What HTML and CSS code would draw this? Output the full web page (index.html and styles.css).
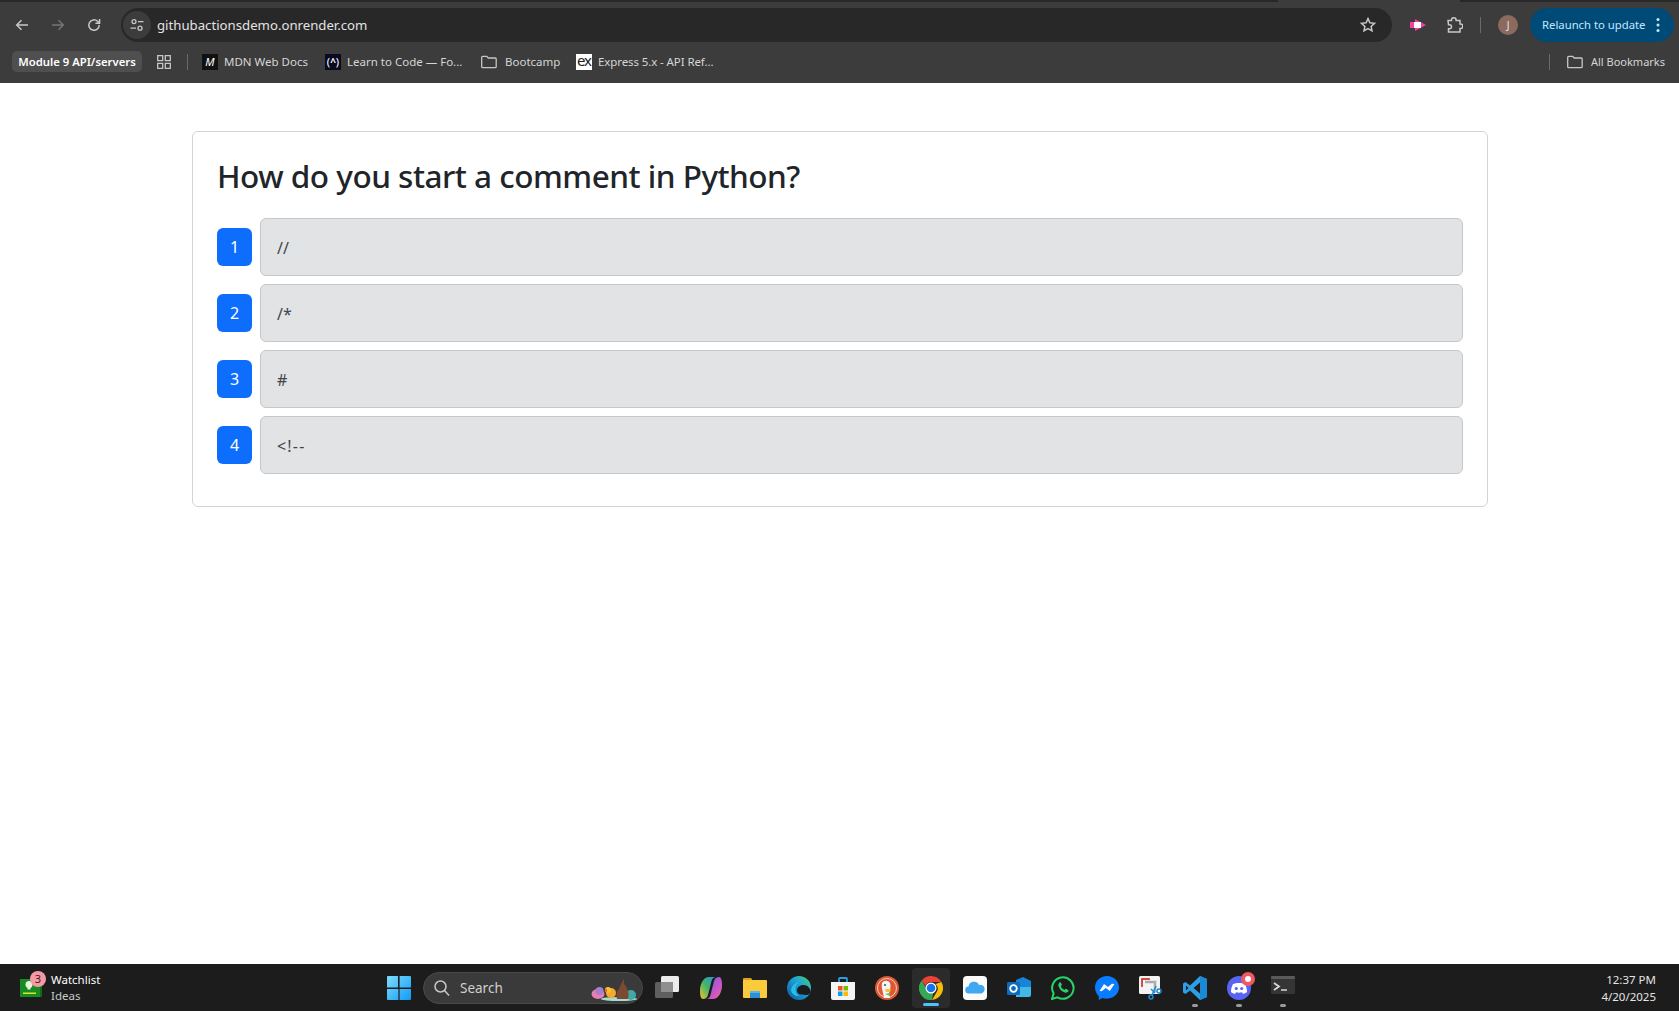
FILE: index.html
```html
<!DOCTYPE html>
<html lang="en">
<head>
<meta charset="utf-8">
<title>Quiz</title>
<link rel="stylesheet" href="styles.css">
</head>
<body>
<header class="browser">
  <div class="tabedge"><span class="tabedge-a"></span><span class="tabedge-b"></span></div>
  <div class="toolbar">
    <button class="nav nav-back"><svg viewBox="0 0 16 16" width="16" height="16"><path d="M14 8H3M7.5 3.2 2.7 8l4.8 4.8" class="st"/></svg></button>
    <button class="nav nav-fwd"><svg viewBox="0 0 16 16" width="16" height="16"><path d="M2 8h11M8.5 3.2 13.3 8l-4.8 4.8" class="st dim"/></svg></button>
    <button class="nav nav-reload"><svg viewBox="0 0 16 16" width="16" height="16"><path d="M13.2 8A5.2 5.2 0 1 1 11.6 4.3L13.4 6M13.6 2v4.2H9.4" class="st"/></svg></button>
    <div class="omnibox">
      <span class="siteinfo"><svg viewBox="0 0 16 16" width="16" height="16"><circle cx="5" cy="4.6" r="2" class="st thin"/><path d="M9 4.6h5.5M1.5 11.2H7" class="st thin"/><circle cx="11" cy="11.2" r="2" class="st thin"/></svg></span>
      <span class="url">githubactionsdemo.onrender.com</span>
      <svg class="star" viewBox="0 0 16 16" width="16" height="16"><path d="m8 1.6 1.9 4.2 4.6.5-3.4 3.1.9 4.5L8 11.6l-4 2.3.9-4.5L1.5 6.3l4.6-.5z" class="st"/></svg>
    </div>
    <svg class="ext-video" viewBox="0 0 16 12" width="16" height="12"><path d="M0 3h5V0l11 6-11 6V9H0z" fill="#f23fa5"/><rect x="4" y="3" width="7" height="6" fill="#fff"/></svg>
    <svg class="ext-puzzle" viewBox="0 0 18 18" width="18" height="18"><path d="M3 4.500h3.500V4a2.300 2.300 0 0 1 4.600 0v.5H15v3.500h.5a2.300 2.300 0 0 1 0 4.600H15V16H3.500v-3.200h1a2 2 0 0 0 0-4h-1z" class="st"/></svg>
    <span class="vsep"></span>
    <span class="avatar">J</span>
    <div class="relaunch"><span class="relaunch-label">Relaunch to update</span><svg viewBox="0 0 4 16" width="4" height="16"><circle cx="2" cy="2.5" r="1.5"/><circle cx="2" cy="8" r="1.5"/><circle cx="2" cy="13.500" r="1.500"/></svg></div>
  </div>
  <div class="bookmarks">
    <span class="chip">Module 9 API/servers</span>
    <svg class="apps" viewBox="0 0 14 14" width="14" height="14"><path d="M.7.7h5v5h-5zM8.300.7h5v5h-5zM.7 8.300h5v5h-5zM8.300 8.300h5v5h-5z" class="st thin"/></svg>
    <span class="vsep vsep-bm"></span>
    <span class="fav fav-mdn">M</span><span class="bm bm-mdn">MDN Web Docs</span>
    <span class="fav fav-fcc">(<b>^</b>)</span><span class="bm bm-fcc">Learn to Code — Fo...</span>
    <svg class="folder folder-boot" viewBox="0 0 16 14" width="16" height="14"><path d="M.7 2.300a1 1 0 0 1 1-1h4l1.500 1.700h7a1 1 0 0 1 1 1v7.700a1 1 0 0 1-1 1H1.700a1 1 0 0 1-1-1z" class="st thin"/></svg><span class="bm bm-boot">Bootcamp</span>
    <span class="fav fav-ex">ex</span><span class="bm bm-ex">Express 5.x - API Ref...</span>
    <span class="spacer"></span>
    <span class="vsep vsep-all"></span>
    <svg class="folder folder-all" viewBox="0 0 16 14" width="16" height="14"><path d="M.7 2.300a1 1 0 0 1 1-1h4l1.500 1.700h7a1 1 0 0 1 1 1v7.700a1 1 0 0 1-1 1H1.700a1 1 0 0 1-1-1z" class="st thin"/></svg><span class="bm bm-all">All Bookmarks</span>
  </div>
</header>

<main class="page">
  <section class="card">
    <h2 class="question">How do you start a comment in Python?</h2>
    <div class="answer"><span class="badge">1</span><button class="option">//</button></div>
    <div class="answer"><span class="badge">2</span><button class="option">/*</button></div>
    <div class="answer"><span class="badge">3</span><button class="option">#</button></div>
    <div class="answer"><span class="badge">4</span><button class="option option-wide">&lt;!--</button></div>
  </section>
</main>

<footer class="taskbar">
  <div class="widget">
    <span class="widget-icon">
      <svg viewBox="0 0 22 18" width="22" height="18"><rect width="22" height="18" fill="#1a8a22"/><rect x="20" width="2" height="18" fill="#0e6b16"/><circle cx="9" cy="5.500" r="3.500" fill="#e8f5dc"/><rect x="7.500" y="8" width="3" height="2.500" fill="#e8f5dc"/><rect x="3" y="13.500" width="13" height="1.500" fill="#d7e82c"/></svg>
      <span class="widget-badge">3</span>
    </span>
    <span class="widget-text"><span class="w1">Watchlist</span><span class="w2">Ideas</span></span>
  </div>
  <div class="tray">
    <svg class="winlogo" viewBox="0 0 24 24" width="24" height="24"><defs><linearGradient id="wg" x1="0" y1="0" x2="1" y2="1"><stop offset="0" stop-color="#7fdcfb"/><stop offset="1" stop-color="#0f9cf5"/></linearGradient></defs><path d="M0 1a1 1 0 0 1 1-1h10v11.400H0zM12.600 0H23a1 1 0 0 1 1 1v10.400H12.600zM0 13h11.400v11H1a1 1 0 0 1-1-1zM12.600 13H24v10a1 1 0 0 1-1 1H12.600z" fill="url(#wg)"/></svg>
    <div class="search">
      <svg viewBox="0 0 18 18" width="18" height="18"><circle cx="7.500" cy="7.500" r="5.500" class="st"/><path d="m11.500 11.500 4.500 5" class="st"/></svg>
      <span class="search-label">Search</span>
      <svg class="easter" viewBox="0 0 46 22" width="46" height="22"><ellipse cx="28" cy="20" rx="18" ry="2" fill="#a8dccb"/><ellipse cx="7" cy="15" rx="6.500" ry="5" fill="#e77fb0"/><ellipse cx="8.500" cy="12" rx="4" ry="4" fill="#a57fc9"/><ellipse cx="40" cy="16" rx="5" ry="5" fill="#3ea9a5"/><circle cx="20" cy="14" r="5" fill="#f6a82d"/><circle cx="17" cy="11" r="3" fill="#f8c331"/><path d="M13 11l3-1v3z" fill="#e9581f"/><path d="M26 20c-1-5 0-8 2-10l2-5 3-5 0 5c3 3 6 9 4 15z" fill="#7a4a33"/></svg>
    </div>
    <span class="tb tb-copy"><svg viewBox="0 0 24 24" width="24" height="24"><rect y="6" width="18" height="16" rx="1.500" fill="#5f5f5f"/><rect x="6" width="18" height="16" rx="1.500" fill="#ececec"/><rect x="6" y="6" width="12" height="10" fill="#8f8f8f"/></svg></span>
    <span class="tb"><svg viewBox="0 0 24 24" width="24" height="24"><defs><linearGradient id="cp1" x1="0" y1="1" x2="1" y2="0"><stop offset="0" stop-color="#f0c22c"/><stop offset=".5" stop-color="#3fb46a"/><stop offset="1" stop-color="#2f8fe8"/></linearGradient><linearGradient id="cp2" x1="0" y1="0" x2="1" y2="1"><stop offset="0" stop-color="#5a6ae8"/><stop offset=".6" stop-color="#c655c8"/><stop offset="1" stop-color="#ee6d8e"/></linearGradient></defs><path d="M1 15C1 7 5 1 10 1h7c-2 0-3.500 1-4.500 4L9 19c-1 3-3 4-5 4-2 0-3-3-3-8z" fill="url(#cp1)"/><path d="M23 9c0 8-4 14-9 14H7c2 0 3.500-1 4.500-4L15 5c1-3 3-4 5-4 2 0 3 3 3 8z" fill="url(#cp2)"/></svg></span>
    <span class="tb"><svg viewBox="0 0 24 24" width="24" height="24"><path d="M0 3a1 1 0 0 1 1-1h7l2 3H0z" fill="#dca21f"/><rect y="4" width="24" height="18" rx="1" fill="#fbcb3c"/><rect x="7" y="15" width="10" height="7" fill="#2a8fd4"/><rect x="7" y="15" width="10" height="2" fill="#55b4ec"/></svg></span>
    <span class="tb"><svg viewBox="0 0 24 24" width="24" height="24"><defs><linearGradient id="ed" x1="0" y1="1" x2="1" y2="0"><stop offset="0" stop-color="#0c59a4"/><stop offset=".6" stop-color="#1fa3d8"/><stop offset="1" stop-color="#4fd26a"/></linearGradient></defs><circle cx="12" cy="12" r="12" fill="url(#ed)"/><path d="M23.500 15c-.5-3-3-6-7-6-4 0-6.500 2.500-6.500 5.500 0 2.500 2 4 4.500 4 2 0 3 .5 5 .5 2.500 0 4-2 4-4z" fill="#1c1c1c"/><path d="M4 14c1-5 5-8 9-8-3 1-5 4-4.500 8 .3 3 2 5 4 6-4 .5-8-2-8.500-6z" fill="#27c0e6"/></svg></span>
    <span class="tb"><svg viewBox="0 0 24 24" width="24" height="24"><path d="M8 6V3a1 1 0 0 1 1-1h6a1 1 0 0 1 1 1v3" fill="none" stroke="#2a9fe0" stroke-width="1.800"/><path d="M0 6h24v16a2 2 0 0 1-2 2H2a2 2 0 0 1-2-2z" fill="#f4f4f4"/><rect x="7" y="10" width="4.500" height="4.500" fill="#f25022"/><rect x="12.500" y="10" width="4.500" height="4.500" fill="#7fba00"/><rect x="7" y="15.500" width="4.500" height="4.500" fill="#00a4ef"/><rect x="12.500" y="15.500" width="4.500" height="4.500" fill="#ffb900"/></svg></span>
    <span class="tb"><svg viewBox="0 0 24 24" width="24" height="24"><circle cx="12" cy="12" r="12" fill="#de5833"/><circle cx="12" cy="12" r="9.500" fill="none" stroke="#f5cfc1" stroke-width="1"/><path d="M7 7c2-3 6-3 8 0 1 3 .5 6-1 8l1 7H9c-.5-5-3-10-2-15z" fill="#f4f4f4"/><path d="M10 13h6l-1 3h-4z" fill="#f6c432"/><path d="M10 18l5-1v3z" fill="#65bc46"/><circle cx="10" cy="9" r="1" fill="#2d4f8e"/></svg></span>
    <span class="tb tb-active"><svg viewBox="0 0 24 24" width="24" height="24"><path d="M12 0a12 12 0 0 1 10.400 6H12a6 6 0 0 0-5.600 3.800L2.700 4.400A12 12 0 0 1 12 0z" fill="#ea4335"/><path d="M22.400 6A12 12 0 0 1 13 24l4.800-8.300A6 6 0 0 0 16.500 8z" fill="#fbbc04"/><path d="M13 24A12 12 0 0 1 2.700 4.400L7.500 12.800a6 6 0 0 0 7 3l-1.500 8.200z" fill="#34a853"/><circle cx="12" cy="12" r="5.500" fill="#fff"/><circle cx="12" cy="12" r="4.300" fill="#1a73e8"/></svg><i class="active-bar"></i></span>
    <span class="tb"><svg viewBox="0 0 24 24" width="24" height="24"><rect width="24" height="24" rx="4" fill="#fbfbfb"/><path d="M6 17.500a3.500 3.500 0 0 1-.5-7A5.500 5.500 0 0 1 16 9a4.300 4.300 0 0 1 2.500 8.500z" fill="#3fa8f0"/></svg></span>
    <span class="tb"><svg viewBox="0 0 24 24" width="24" height="24"><path d="M9 4l7-3 8 4v12a2 2 0 0 1-2 2H9z" fill="#1784d8"/><path d="M9 11h15v8a2 2 0 0 1-2 2H9z" fill="#42b8e8"/><rect y="6" width="13" height="13" rx="1.500" fill="#0f6cbd"/><circle cx="6.500" cy="12.500" r="3.300" fill="none" stroke="#fff" stroke-width="1.800"/></svg></span>
    <span class="tb"><svg viewBox="0 0 24 24" width="24" height="24"><path d="M1 23l1.600-5.600A10.700 10.700 0 1 1 6.500 21.300z" fill="none" stroke="#25d366" stroke-width="2"/><path d="M8.500 6.700c-1 .7-1.500 2-1 3.500 1 3 3.300 5.300 6.300 6.300 1.500.5 2.800 0 3.500-1 .4-.6.300-1.300-.2-1.600l-1.800-1c-.4-.2-.8-.1-1.100.2l-.7.800c-1.600-.7-3-2-3.700-3.700l.8-.7c.3-.3.400-.7.200-1.100l-1-1.800c-.3-.5-1-.7-1.300-.4z" fill="#25d366"/></svg></span>
    <span class="tb"><svg viewBox="0 0 24 24" width="24" height="24"><path d="M12 0C5.300 0 0 5 0 11.600c0 3.500 1.500 6.500 3.800 8.600V24l3.600-2c1.400.4 3 .7 4.600.7 6.700 0 12-5 12-11.100C24 5 18.700 0 12 0z" fill="#0a7cff"/><path d="M4.500 15l4.500-7 4 3 4-3.200 2.500.2-4.700 7-4-3-4.200 3.200z" fill="#fff"/></svg></span>
    <span class="tb"><svg viewBox="0 0 24 24" width="24" height="24"><rect width="21" height="18" rx="1.500" fill="#f3f3f3"/><path d="M2 2h9v2H4v7H2z" fill="#d03a2b" stroke="#f3f3f3" stroke-dasharray="2 .6" stroke-width=".3"/><path d="M6 6h10v10" fill="none" stroke="#a9adb0" stroke-width="2.500"/><path d="M12 13l4 4" stroke="#1c8ad6" stroke-width="1.500"/><path d="M17 10l-4 9" stroke="#1c8ad6" stroke-width="1.500"/><circle cx="12" cy="21" r="2" fill="none" stroke="#1c8ad6" stroke-width="1.500"/><circle cx="20" cy="15" r="2" fill="none" stroke="#1c8ad6" stroke-width="1.500"/></svg></span>
    <span class="tb tb-run"><svg viewBox="0 0 24 24" width="24" height="24"><path d="M17 0l7 3v18l-7 3L7 14.500 2.500 18 0 16.500V7.500L2.500 6 7 9.500z" fill="#2c9fe6"/><path d="M17 0l7 3v18l-7 3z" fill="#1a8ad4"/><path d="M17 6.500 10.500 12l6.500 5.500z" fill="#1c1c1c"/><path d="M3 9.500 5.500 12 3 14.500z" fill="#1c1c1c"/></svg><i class="run-bar"></i></span>
    <span class="tb tb-run"><svg viewBox="0 0 24 24" width="24" height="24"><circle cx="12" cy="12" r="12" fill="#5865f2"/><path d="M6 8c3-1.500 9-1.500 12 0 1.300 2.500 2 5 2 8-1.300 1-2.500 1.500-4 2l-1-1.700c-2 .5-4 .5-6 0L8 18c-1.500-.5-2.700-1-4-2 0-3 .7-5.500 2-8z" fill="#fff"/><circle cx="9.300" cy="12.500" r="1.600" fill="#5865f2"/><circle cx="14.700" cy="12.500" r="1.600" fill="#5865f2"/></svg><i class="notif"></i><i class="run-bar"></i></span>
    <span class="tb tb-run"><svg viewBox="0 0 24 24" width="24" height="24"><rect width="24" height="18" rx="1.500" fill="#353535"/><rect width="24" height="3" rx="1" fill="#5a5a5a"/><path d="M3 7l5 3.500L3 14" fill="none" stroke="#d8d8d8" stroke-width="1.800"/><path d="M10 14h6" stroke="#d8d8d8" stroke-width="1.500"/></svg><i class="run-bar"></i></span>
  </div>
  <div class="clock"><span>12:37 PM</span><span>4/20/2025</span></div>
</footer>
</body>
</html>
```
FILE: styles.css
```css
* { box-sizing: border-box; }
html, body { margin: 0; height: 100%; }
body {
  display: flex;
  flex-direction: column;
  height: 1011px;
  overflow: hidden;
  background: #fff;
  font-family: "Noto Sans", "Open Sans", sans-serif;
}
.st { fill: none; stroke: #c7c7c7; stroke-width: 1.500; }
.st.thin { stroke-width: 1.300; }
.st.dim { stroke: #747474; }

/* browser chrome */
.browser { height: 83px; flex: none; background: #3c3c3c; color: #e3e3e3; }
.tabedge { height: 2px; display: flex; justify-content: space-between; }
.tabedge-a { width: 1278px; background: #282828; }
.tabedge-b { width: 219px; background: #282828; }
.toolbar { height: 40px; padding-top: 6px; display: flex; align-items: flex-start; }
.nav {
  width: 36px; height: 34px; padding: 0; border: 0; background: none;
  display: flex; align-items: center; justify-content: center;
}
.nav-back { margin-left: 4px; }
.omnibox {
  width: 1271px; height: 34px; margin-left: 9px; padding-right: 16px;
  background: #282828; border-radius: 17px;
  display: flex; align-items: center;
}
.siteinfo {
  width: 28px; height: 28px; margin-left: 2px; border-radius: 50%; background: #3c3c3c;
  display: flex; align-items: center; justify-content: center;
}
.url { margin-left: 6px; font-size: 13.200px; color: #e3e3e3; flex: 1; }
.toolbar > svg { align-self: center; margin-top: -1px; }
.ext-video { margin-left: 18px; }
.ext-puzzle { margin-left: 19px; }
.vsep { width: 1px; background: #6a6a6a; flex: none; }
.toolbar .vsep { height: 16px; margin: 9px 0 0 17px; }
.avatar {
  width: 20px; height: 20px; margin: 7px 0 0 17px; border-radius: 50%;
  background: #8b6b5f; color: #f4e9e4; font-size: 10px;
  display: flex; align-items: center; justify-content: center;
}
.relaunch {
  width: 144px; height: 34px; margin-left: 12px; padding: 0 14px 0 12px;
  border-radius: 17px; background: #004a77; color: #c2e7ff;
  display: flex; align-items: center; justify-content: space-between;
  font-size: 11.300px; white-space: nowrap;
}
.relaunch-label { margin-top: -2px; }
.relaunch svg { fill: #c2e7ff; flex: none; }

.bookmarks { height: 41px; padding: 0 14px 2px 12px; display: flex; align-items: center; font-size: 11.500px; color: #d5d5d5; }
.chip {
  width: 130px; height: 21px; border-radius: 5px; background: #4f4f4f; color: #fff;
  font-weight: 600; font-size: 11.300px; white-space: nowrap;
  display: flex; align-items: center; justify-content: center;
}
.apps { margin-left: 15px; }
.vsep-bm { height: 16px; margin-left: 16px; }
.fav {
  width: 16px; height: 16px; flex: none; font-size: 11px;
  display: flex; align-items: center; justify-content: center;
}
.fav-mdn { margin-left: 14px; background: #111; color: #fff; font-style: italic; font-size: 11px; }
.fav-fcc { margin-left: 16px; background: #0a0a23; color: #fff; font-size: 11px; }
.fav-fcc b { font-size: 10px; }
.fav-ex { margin-left: 17px; background: #fff; color: #222; font-size: 15px; line-height: 1; letter-spacing: -1px; padding-bottom: 3px; }
.bm { white-space: nowrap; }
.bm-mdn { margin-left: 6px; width: 85px; }
.bm-fcc { margin-left: 6px; width: 116px; }
.folder-boot { margin-left: 18px; }
.bm-boot { margin-left: 8px; width: 54px; }
.bm-ex { margin-left: 6px; letter-spacing: -.1px; }
.spacer { flex: 1; }
.vsep-all { height: 16px; margin-right: 17px; }
.bm-all { margin-left: 8px; font-size: 11px; }

/* quiz */
.page { flex: 1; padding: 48px 192px 0 192px; }
.card {
  width: 1296px; padding: 24px 24px 24px;
  border: 1px solid #d3d4d5; border-radius: 6px; background: #fff;
}
.question {
  margin: 0 0 23px; font-size: 31.500px; font-weight: 500; line-height: 39px;
  color: #212529; font-family: "Noto Sans", sans-serif; letter-spacing: -.5px;
}
.answer { display: flex; align-items: center; margin-bottom: 8px; }
.badge {
  width: 35px; height: 38px; margin-right: 8px; flex: none; border-radius: 6px;
  background: #0d6efd; color: #fff; font-size: 16px;
  display: flex; align-items: center; justify-content: center;
}
.option {
  flex: 1; height: 58px; padding: 2px 16px 0; text-align: left;
  background: #e2e3e5; border: 1px solid #c4c8cb; border-radius: 6px;
  color: #41464b; font-size: 16px; font-family: inherit;
}
.option-wide { letter-spacing: 1.200px; }

/* taskbar */
.taskbar {
  height: 47px; flex: none; background: #1c1c1c; color: #fff; position: relative;
  display: flex; align-items: center; font-size: 11.500px;
}
.widget { width: 387px; flex: none; display: flex; align-items: center; padding-left: 20px; }
.widget-icon { position: relative; width: 22px; height: 18px; margin-right: 9px; }
.widget-icon svg { display: block; }
.widget-badge {
  position: absolute; top: -8px; left: 10px; width: 16px; height: 16px; border-radius: 50%;
  background: #f59aa5; color: #3a1a1e; font-size: 11px;
  display: flex; align-items: center; justify-content: center;
}
.widget-text { display: flex; flex-direction: column; line-height: 16px; }
.w1 { color: #fff; }
.w2 { color: #c8c8c8; }
.tray { display: flex; align-items: center; }
.winlogo { margin-right: 12px; flex: none; }
.search {
  width: 220px; height: 32px; border-radius: 16px; background: #3a3a3a; border: 1px solid #4a4a4a;
  margin-right: 2px; padding-left: 9px;
  display: flex; align-items: center; color: #d0d0d0; font-size: 13.500px; position: relative;
}
.search-label { margin-left: 9px; }
.easter { position: absolute; right: 5px; top: 6px; }
.tb {
  position: relative; width: 44px; height: 40px; flex: none;
  display: flex; align-items: center; justify-content: center;
}
.tb-active::before {
  content: ""; position: absolute; left: 3px; right: 3px; top: 0; bottom: 0;
  background: #2b2b2b; border-radius: 4px;
}
.tb-active svg { position: relative; }
.active-bar {
  position: absolute; left: 14px; width: 16px; bottom: 2px; height: 3px;
  border-radius: 2px; background: #4cc2ff;
}
.run-bar {
  position: absolute; left: 19px; width: 6px; bottom: 1px; height: 3px;
  border-radius: 2px; background: #9a9a9a;
}
.notif {
  position: absolute; top: 4px; right: 6px; width: 14px; height: 14px; border-radius: 50%;
  background: #fff; border: 4px solid #ee5a62;
}
.clock {
  margin-left: auto; padding-right: 23px; display: flex; flex-direction: column; align-items: flex-end;
  line-height: 17px; font-size: 11.500px; color: #e4e4e4;
}
```
